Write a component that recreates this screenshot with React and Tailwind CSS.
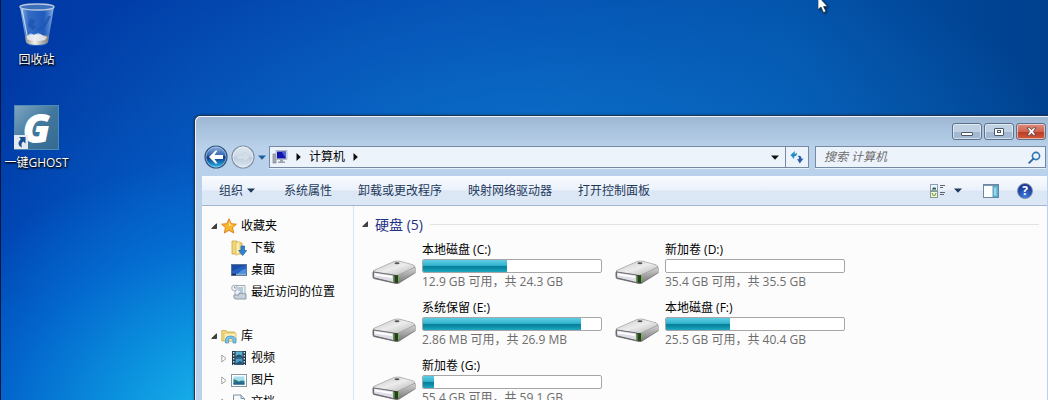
import { useState } from 'react';

const drives = [
  { name: '本地磁盘 (C:)', used: 47, info: '12.9 GB 可用，共 24.3 GB' },
  { name: '新加卷 (D:)', used: 0, info: '35.4 GB 可用，共 35.5 GB' },
  { name: '系统保留 (E:)', used: 89, info: '2.86 MB 可用，共 26.9 MB' },
  { name: '本地磁盘 (F:)', used: 36, info: '25.5 GB 可用，共 40.4 GB' },
  { name: '新加卷 (G:)', used: 6, info: '55.4 GB 可用，共 59.1 GB' },
];

function RecycleBinIcon() {
  return (
    <svg width="36" height="44" viewBox="0 0 36 44" aria-hidden="true">
      <defs>
        <linearGradient id="binGlass" x1="0" x2="1" y1="0" y2="0">
          <stop offset="0" stopColor="#b9d8f5" stopOpacity=".85" />
          <stop offset=".25" stopColor="#5f96dd" stopOpacity=".55" />
          <stop offset=".7" stopColor="#3f7bd0" stopOpacity=".5" />
          <stop offset="1" stopColor="#a8c8ee" stopOpacity=".85" />
        </linearGradient>
        <linearGradient id="binBase" x1="0" x2="1" y1="0" y2="0">
          <stop offset="0" stopColor="#8e8e8c" />
          <stop offset=".4" stopColor="#f2f0ea" />
          <stop offset="1" stopColor="#77797c" />
        </linearGradient>
      </defs>
      <path d="M1 4 L7 39 Q8 43 18 43 Q28 43 29 39 L35 4Z" fill="url(#binGlass)" />
      <path d="M6 33 Q17 30 30 33 L29 39 Q27 42 18 42 Q9 42 7 39Z" fill="url(#binBase)" />
      <path d="M8 34 Q11 28 15 32 Q20 28 24 33 L28 34 L26 37 Q18 39 10 37Z" fill="#e9eef5" opacity=".8" />
      <path d="M11 15 l5 2 -2 5 3 2 -3 3 -5 -4z" fill="#1c55b0" opacity=".8" />
      <path d="M32 13 Q29 22 22 27 L17 27 Q26 23 29 13Z" fill="#1c55b0" opacity=".75" />
      <ellipse cx="18" cy="4" rx="17" ry="3" fill="#3c6fbe" stroke="#b9c8dc" strokeWidth="1.4" />
      <path d="M3 6 L9 37" stroke="#e1effc" strokeWidth="1" opacity=".8" />
    </svg>
  );
}

function GhostIcon() {
  return (
    <span className="relative flex size-[45px] items-center justify-center border border-[#4f8ab4] bg-gradient-to-br from-[#7ea6c0] via-[#41789e] to-[#346a91]">
      <span className="font-['Open_Sans','Liberation_Sans',sans-serif] text-[40px] leading-10 font-extrabold text-white italic [text-shadow:none]">G</span>
      <svg className="absolute bottom-0 -left-px" width="14" height="14" viewBox="0 0 14 14" aria-hidden="true">
        <rect width="14" height="14" fill="#e4e9ee" />
        <path d="M5 2 L11.500 2 L11.500 8.500 L9.300 6.500 Q6.500 8 8 12.500 Q1.500 10 6.800 4Z" fill="#174f94" />
      </svg>
    </span>
  );
}

function BackIcon() {
  return (
    <svg width="24" height="24" viewBox="0 0 24 24" aria-hidden="true">
      <defs>
        <linearGradient id="backBlue" x1="0" x2="0" y1="0" y2="1">
          <stop offset="0" stopColor="#8fb3df" />
          <stop offset=".45" stopColor="#2f62ad" />
          <stop offset=".5" stopColor="#0b3380" />
          <stop offset="1" stopColor="#2bc0f0" />
        </linearGradient>
      </defs>
      <circle cx="12" cy="12" r="11" fill="url(#backBlue)" stroke="#33537e" strokeWidth="1.200" />
      <circle cx="12" cy="12" r="10" fill="none" stroke="#c5dcf4" strokeWidth=".8" opacity=".7" />
      <path d="M5 12 L11.500 5.500 H13.500 L10.500 10 H19 V14 H10.500 L13.500 18.500 H11.500Z" fill="#fff" />
    </svg>
  );
}

function ForwardIcon() {
  return (
    <svg width="24" height="24" viewBox="0 0 24 24" aria-hidden="true">
      <defs>
        <linearGradient id="fwdGrey" x1="0" x2="0" y1="0" y2="1">
          <stop offset="0" stopColor="#dde6f0" />
          <stop offset=".48" stopColor="#d0dbe7" />
          <stop offset=".52" stopColor="#bccbdb" />
          <stop offset="1" stopColor="#dfe9f3" />
        </linearGradient>
      </defs>
      <circle cx="12" cy="12" r="11" fill="url(#fwdGrey)" stroke="#8090a4" strokeWidth="1.200" />
      <circle cx="12" cy="12" r="10" fill="none" stroke="#f0f5fa" strokeWidth=".8" opacity=".8" />
      <path d="M19 12 L13 7 V10 H6 V14 H13 V17Z" fill="#d3dee9" stroke="#c3d0de" strokeWidth=".6" />
    </svg>
  );
}

function ComputerIcon() {
  return (
    <svg width="16" height="16" viewBox="0 0 16 16" aria-hidden="true">
      <rect x="1" y="5" width="3" height="9" fill="#a8adb5" stroke="#74797f" strokeWidth=".6" />
      <rect x="4" y="1.500" width="11" height="9" fill="#dfe4ea" stroke="#9aa2ac" strokeWidth=".6" />
      <rect x="5" y="2.500" width="9" height="7" fill="#1414a8" />
      <path d="M9.500 2.500 H14 V9.500 Z" fill="#4a63e0" />
      <path d="M8 10.500 h3 v2 h2 v1.500 h-7 v-1.500 h2z" fill="#9fa5ad" />
    </svg>
  );
}

function RefreshIcon() {
  return (
    <svg width="14" height="14" viewBox="0 0 14 14" fill="none" aria-hidden="true">
      <path d="M.5 5 L5 1 L4.600 3.800 Q6.500 4 7 2.500 Q7.300 6.500 4.300 6.300 L4 9Z" fill="#1e8fc4" />
      <path d="M13.500 8.500 L9.800 13.500 L7 9 L9 9.200 Q9.300 6.500 7.500 6 Q11.500 5 11.500 8.700Z" fill="#2b5fa8" />
    </svg>
  );
}

function SearchIcon() {
  return (
    <svg width="13" height="13" viewBox="0 0 13 13" fill="none" aria-hidden="true">
      <circle cx="8" cy="5" r="3.600" stroke="#3175b5" strokeWidth="1.600" fill="#e8f3fc" />
      <path d="M5.200 7.800 L1.200 11.800" stroke="#2b66a3" strokeWidth="1.900" strokeLinecap="round" />
    </svg>
  );
}

function ViewIcon() {
  return (
    <svg width="16" height="16" viewBox="0 0 16 16" aria-hidden="true">
      <rect x=".5" y="1.500" width="7" height="6" fill="#eef6fb" stroke="#8aa2ae" />
      <path d="M2 6 L4 4 L5 5 L6 4.500 V6.500 H2Z" fill="#22584f" />
      <rect x=".5" y="8.500" width="7" height="6" fill="#f3f6da" stroke="#8a9a86" />
      <path d="M2 10 L3.500 13 M6 10 L4.500 13" stroke="#5e8a3d" />
      <path d="M10 2.500 h5 M10 4.500 h3 M10 9.500 h5 M10 11.500 h4" stroke="#5b6470" />
    </svg>
  );
}

function PreviewIcon() {
  return (
    <svg width="16" height="14" viewBox="0 0 16 14" aria-hidden="true">
      <rect x=".5" y=".5" width="15" height="13" fill="#fdfefe" stroke="#6d87a3" />
      <path d="M1 1.500 H15" stroke="#8098b2" />
      <rect x="10" y="2" width="5" height="11" fill="#6fc2dd" stroke="#4b8eac" strokeWidth=".8" />
      <path d="M12 4 V11" stroke="#c8ecf6" />
    </svg>
  );
}

function StarIcon() {
  return (
    <svg width="16" height="16" viewBox="0 0 16 16" aria-hidden="true">
      <path d="M8 .8 L10.200 5.700 L15.400 6.200 L11.500 9.700 L12.700 15 L8 12.300 L3.300 15 L4.500 9.700 L.6 6.200 L5.800 5.700Z" fill="#fbb72c" stroke="#d9791a" strokeWidth=".9" />
      <path d="M8 3 L9.300 6.800 L12.500 7 L8 8Z" fill="#ffe9a3" />
    </svg>
  );
}

function DownloadIcon() {
  return (
    <svg width="16" height="16" viewBox="0 0 16 16" aria-hidden="true">
      <path d="M1 1 H6 L7 3 H11 V14 H1Z" fill="#f1d77a" stroke="#c9a63d" strokeWidth=".8" />
      <path d="M5 3 L9 1.500 V13 L5 15.500Z" fill="#fbeeb0" stroke="#d0b355" strokeWidth=".6" />
      <path d="M10 6 H13.500 V10.500 H15.700 L11.700 15.500 L7.700 10.500 H10Z" fill="#2b83d2" stroke="#1a5fa6" strokeWidth=".7" />
    </svg>
  );
}

function DesktopIcon() {
  return (
    <svg width="16" height="16" viewBox="0 0 16 16" aria-hidden="true">
      <rect x=".5" y="2.500" width="15" height="11" fill="#2762c0" stroke="#5a7295" />
      <path d="M1 3 H15 L1 9Z" fill="#1b4ca6" />
      <path d="M6 13 Q10 7 15 7 V13Z" fill="#4c93de" />
      <path d="M1 12.500 H5" stroke="#1b2c4c" strokeWidth="1.400" />
      <path d="M5 12.500 H15" stroke="#8fb0d2" strokeWidth="1.400" />
    </svg>
  );
}

function RecentIcon() {
  return (
    <svg width="16" height="16" viewBox="0 0 16 16" aria-hidden="true">
      <path d="M4 1.500 H14 V12 H4Z" fill="#edf2f6" stroke="#8d9aa8" strokeWidth=".8" />
      <circle cx="3.500" cy="4" r="2.800" fill="#f4f6f8" stroke="#8d9aa8" strokeWidth=".8" />
      <path d="M3.500 2.500 V4 H5" stroke="#68788a" fill="none" strokeWidth=".8" />
      <path d="M7 4 h5 M7 6 h5 M9 8 h3" stroke="#7fa3bf" />
      <path d="M3 11 H8 V9 L15 10 V15 H4 Q2 14 3 11Z" fill="#c5d2dc" stroke="#7d8b98" strokeWidth=".8" />
    </svg>
  );
}

function LibraryIcon() {
  return (
    <svg width="16" height="16" viewBox="0 0 16 16" aria-hidden="true">
      <path d="M.8 2.500 H5 L6 4 H13.500 V13 H.8Z" fill="#f4dc84" stroke="#c8a742" strokeWidth=".8" />
      <path d="M3 5 H15 V13 H3Z" fill="#fbeeb2" stroke="#d3b553" strokeWidth=".7" />
      <path d="M4.500 15 V11 Q5 8 9.500 8 Q14 8 15 11 V15 H12 V12 Q11.500 10.500 9.500 10.500 Q8 10.500 7.500 12 V15Z" fill="#7cc3ea" stroke="#3f8fc2" strokeWidth=".7" />
    </svg>
  );
}

function VideoIcon() {
  return (
    <svg width="16" height="16" viewBox="0 0 16 16" aria-hidden="true">
      <rect x="1" y="1" width="14" height="14" fill="#26384a" />
      <rect x="4.500" y="1.500" width="7" height="6" fill="#59b0cf" />
      <rect x="4.500" y="8.500" width="7" height="6" fill="#4a9fcb" />
      <path d="M4.500 6 L8 4.500 L11.500 6 V7.500 H4.500Z M4.500 13.500 L9 11 L11.500 12.500 V14.500 H4.500Z" fill="#24536f" />
      <path d="M2.700 2 V15 M13.300 2 V15" stroke="#dfe8ee" strokeWidth="1.300" strokeDasharray="1.500 1.500" />
    </svg>
  );
}

function PictureIcon() {
  return (
    <svg width="16" height="16" viewBox="0 0 16 16" aria-hidden="true">
      <rect x=".5" y="2.500" width="15" height="12" fill="#fff" stroke="#8b979f" />
      <rect x="2.500" y="4.500" width="11" height="8" fill="#a5dcee" />
      <path d="M2.500 7 Q6 8 8 9.500 Q11 8 13.500 9 V12.500 H2.500Z" fill="#25807f" />
      <path d="M2.500 11 Q8 9.500 13.500 11.500 V12.500 H2.500Z" fill="#2c5f96" />
    </svg>
  );
}

function DocumentIcon() {
  return (
    <svg width="16" height="16" viewBox="0 0 16 16" aria-hidden="true">
      <path d="M2.500 1 H10 L13.500 4.500 V15 H2.500Z" fill="#f6fafc" stroke="#7f93a3" />
      <path d="M10 1 V4.500 H13.500" fill="#d3e2ec" stroke="#7f93a3" />
      <path d="M5 6.500 h6 M5 8.500 h6 M5 10.500 h6" stroke="#77a9c8" />
    </svg>
  );
}

function DriveIcon() {
  return (
    <svg className="shrink-0" width="44" height="26" viewBox="0 0 44 26" aria-hidden="true">
      <defs>
        <linearGradient id="driveTop" x1="0" x2="1" y1="0" y2="1">
          <stop offset="0" stopColor="#c4c4c4" />
          <stop offset=".5" stopColor="#ececec" />
          <stop offset="1" stopColor="#b4b4b4" />
        </linearGradient>
        <linearGradient id="driveSide" x1="0" x2="0" y1="0" y2="1">
          <stop offset="0" stopColor="#d2d2d2" />
          <stop offset="1" stopColor="#7a7a7a" />
        </linearGradient>
      </defs>
      <path d="M1.500 10.500 L22 1.500 Q25 .5 28 1.200 L41 4.800 Q43.500 6 43.500 8 V13 L27 23.500 Q25 24.500 22 23.500 L2 19 Q.5 18.500 .5 16.500 V12.500Z" fill="#777" />
      <path d="M1.500 10.500 L22 1.500 Q25 .5 28 1.200 L41 4.800 Q43.500 6.500 42 7.500 L26 15 Q24.500 15.500 22 15 L2 12Z" fill="url(#driveTop)" stroke="#a6a6a6" strokeWidth=".6" />
      <path d="M26 15 L43 7.500 V12.500 L27 22.500Z" fill="url(#driveSide)" />
      <path d="M1.500 12 L21.500 15 V22.500 L2.500 18 Q1.500 17.500 1.500 16Z" fill="#dedee8" stroke="#626266" strokeWidth=".9" />
      <path d="M3 13.500 L20 16 V18 L3 15.500Z" fill="#fff" />
      <path d="M22 15 L26 15.200 V23 L22 22.500Z" fill="#24401f" />
      <path d="M22 16 V22 M26.500 15.500 V21.500" stroke="#76b24c" />
      <ellipse cx="25" cy="3.200" rx="2.500" ry="1" fill="#555" />
    </svg>
  );
}

function DownArrow({ className }) {
  return (
    <svg className={className} width="8" height="5" viewBox="0 0 8 5" aria-hidden="true">
      <path d="M0 .5 H8 L4 4.800Z" fill="currentColor" />
    </svg>
  );
}

function RightArrow() {
  return (
    <svg width="5" height="8" viewBox="0 0 5 8" aria-hidden="true">
      <path d="M.5 0 L4.800 4 L.5 8Z" fill="#0b0b0b" />
    </svg>
  );
}

function OpenTriangle() {
  return (
    <svg width="6" height="6" viewBox="0 0 7 7" aria-hidden="true">
      <path d="M6.500 .8 V6.500 H.8Z" fill="#404040" stroke="#111" strokeWidth=".8" />
    </svg>
  );
}

function ClosedTriangle() {
  return (
    <svg width="6" height="9" viewBox="0 0 6 9" aria-hidden="true">
      <path d="M.8 1 L5 4.500 L.8 8Z" fill="#fff" stroke="#a2a2a2" />
    </svg>
  );
}

const favorites = [
  { name: '下载', icon: <DownloadIcon /> },
  { name: '桌面', icon: <DesktopIcon /> },
  { name: '最近访问的位置', icon: <RecentIcon /> },
];

const libraries = [
  { name: '视频', icon: <VideoIcon />, expandable: true },
  { name: '图片', icon: <PictureIcon />, expandable: true },
  { name: '文档', icon: <DocumentIcon />, expandable: true },
];

function TreeSection({ title, icon, items }) {
  const [open, setOpen] = useState(true);

  return (
    <section className="mb-[22px]">
      <button onClick={() => setOpen(!open)} aria-expanded={open} className="flex h-[22px] items-center gap-1 whitespace-nowrap">
        <span className="flex w-[6px] justify-center">{open ? <OpenTriangle /> : <ClosedTriangle />}</span>
        {icon}
        <span>{title}</span>
      </button>
      {open && (
        <ul>
          {items.map((item) => (
            <li key={item.name}>
              <button className="flex h-[22px] items-center gap-1 pl-[10px] whitespace-nowrap">
                <span className="w-[6px]">{item.expandable && <ClosedTriangle />}</span>
                {item.icon}
                <span>{item.name}</span>
              </button>
            </li>
          ))}
        </ul>
      )}
    </section>
  );
}

function DriveTile({ drive }) {
  return (
    <li className="flex h-[58px] gap-[6px]">
      <div className="pt-[19px]">
        <DriveIcon />
      </div>
      <div className="w-[180px]">
        <p className="h-[18px] leading-[18px] whitespace-nowrap text-black">{drive.name}</p>
        <div className="h-[14px] overflow-hidden rounded-[2px] border border-[#a6a6a6] bg-white">
          <div
            className="h-full bg-[linear-gradient(180deg,#5fcbe2_0%,#33b5d0_45%,#0a7f9a_52%,#0a8ba5_70%,#20a9c2_100%)]"
            style={{ width: `${drive.used}%` }}
          />
        </div>
        <p className="h-[18px] leading-[18px] whitespace-nowrap text-[#6d6d6d]">{drive.info}</p>
      </div>
    </li>
  );
}

function DesktopShortcut({ icon, label }) {
  return (
    <button className="flex w-[71px] flex-col items-center gap-[5px] leading-4 whitespace-nowrap text-white [text-shadow:1px_1px_2px_#000,0_1px_2px_#000]">
      {icon}
      {label}
    </button>
  );
}

function ExplorerWindow() {
  const [keyword, setKeyword] = useState('');
  const captionButton =
    'flex h-[17px] w-[30px] items-center justify-center rounded-[3px] border border-[#5b7190] shadow-[inset_0_0_0_1px_rgba(255,255,255,0.55)]';

  return (
    <main className="mt-[115px] flex min-w-0 flex-1 flex-col rounded-tl-[6px] border-t border-l border-[#1f3550] bg-[linear-gradient(180deg,#9db7d3_0px,#b9d1ea_32px,#b9d1ea_100%)] pr-px pl-[7px] shadow-[inset_1px_1px_0_#eaf4ff,0_0_3px_rgba(0,0,0,0.4)]">
      <header className="flex h-[30px] shrink-0 items-start justify-end gap-[2px] pt-[7px] pr-px">
        <button aria-label="最小化" className={`${captionButton} bg-[linear-gradient(180deg,#c0d1e4_50%,#a3b9d1_50%)]`}>
          <span className="mt-1 h-1 w-3 rounded-[1px] border border-[#4a5769] bg-white" />
        </button>
        <button aria-label="最大化" className={`${captionButton} bg-[linear-gradient(180deg,#c0d1e4_50%,#a3b9d1_50%)]`}>
          <span className="flex h-2 w-[10px] items-center justify-center rounded-[1px] border border-[#4a5769] bg-white">
            <span className="h-[3px] w-1 border border-[#4a5769]" />
          </span>
        </button>
        <button aria-label="关闭" className={`${captionButton} bg-[linear-gradient(180deg,#dd8d7d_0%,#cf6550_50%,#b93a24_50%,#cf5a3c_100%)]`}>
          <svg width="11" height="9" viewBox="0 0 11 9" aria-hidden="true">
            <path d="M1 .8 H4 L5.500 2.700 L7 .8 H10 L7.300 4.500 L10 8.200 H7 L5.500 6.300 L4 8.200 H1 L3.700 4.500Z" fill="#fff" stroke="#5b3a41" strokeWidth=".8" />
          </svg>
        </button>
      </header>

      <div className="flex h-[30px] shrink-0 items-start pr-px">
        <nav className="flex h-[22px] items-center pl-[2px]">
          <button aria-label="后退"><BackIcon /></button>
          <button aria-label="前进" className="ml-[3px]"><ForwardIcon /></button>
          <button aria-label="最近的页面" className="mx-[3px]"><DownArrow className="text-[#1d5e9e]" /></button>
        </nav>
        <div className="flex h-[22px] min-w-0 flex-1 items-center border border-[#7589a3] bg-[#edf3fb] shadow-[0_1px_0_#e6f0fa]">
          <div className="flex flex-1 items-center gap-2 pl-[2px]">
            <ComputerIcon />
            <RightArrow />
            <span className="text-black">计算机</span>
            <RightArrow />
          </div>
          <button aria-label="以前的位置" className="px-[6px]"><DownArrow className="text-[#111]" /></button>
          <button aria-label="刷新" className="flex h-full w-[23px] items-center justify-center border-l border-[#7589a3]"><RefreshIcon /></button>
        </div>
        <label className="ml-[6px] flex h-[22px] w-[231px] items-center border border-[#7589a3] bg-[#edf3fb] pr-1 pl-2 shadow-[0_1px_0_#e6f0fa]">
          <input
            type="text"
            aria-label="搜索 计算机"
            placeholder="搜索 计算机"
            value={keyword}
            onChange={(e) => setKeyword(e.target.value)}
            className="min-w-0 flex-1 bg-transparent italic outline-none placeholder:text-[#6d6d6d]"
          />
          <SearchIcon />
        </label>
      </div>

      <div className="flex h-[30px] shrink-0 items-center gap-[26px] border-b border-[#a3b6cd] bg-[linear-gradient(180deg,#fafcfe_0%,#eaf1fa_48%,#dce7f5_52%,#dde8f6_100%)] pr-[14px] pl-[17px] whitespace-nowrap text-[#1e395b]">
        <button className="flex w-[39px] items-center gap-1">组织<DownArrow className="shrink-0" /></button>
        <button>系统属性</button>
        <button>卸载或更改程序</button>
        <button>映射网络驱动器</button>
        <button>打开控制面板</button>
        <div className="ml-auto flex items-center">
          <button aria-label="更改您的视图" className="flex items-center gap-2"><ViewIcon /><DownArrow /></button>
          <button aria-label="显示预览窗格" className="ml-[21px]"><PreviewIcon /></button>
          <button aria-label="获取帮助" className="ml-[18px] flex size-4 items-center justify-center rounded-full border border-[#7d8ba6] bg-[radial-gradient(circle_at_50%_90%,#3f7fe0,#1b3a98_70%)] text-[12px] leading-3 font-bold text-white">?</button>
        </div>
      </div>

      <div className="flex min-h-0 flex-1 bg-[#fcfcfc]">
        <aside className="w-[152px] shrink-0 overflow-hidden border-r border-[#d6e5f5] pt-[9px] pl-[9px] text-black">
          <TreeSection title="收藏夹" icon={<StarIcon />} items={favorites} />
          <TreeSection title="库" icon={<LibraryIcon />} items={libraries} />
        </aside>
        <section className="min-w-0 flex-1 overflow-hidden pt-[7px] pl-2">
          <h2 className="flex h-[22px] items-center gap-[7px] pr-2 text-[14px] whitespace-nowrap text-[#1e3287]">
            <OpenTriangle />
            硬盘 (5)
            <span className="h-px flex-1 bg-[#e2e2e2]" />
          </h2>
          <ul className="mt-[6px] grid grid-cols-[repeat(auto-fill,243px)] pl-[10px]">
            {drives.map((drive) => (
              <DriveTile key={drive.name} drive={drive} />
            ))}
          </ul>
        </section>
      </div>
    </main>
  );
}

function App() {
  return (
    <div className="relative flex h-screen overflow-hidden border-l border-[#06183a] bg-[radial-gradient(ellipse_440px_350px_at_24%_108%,#22c6f2_0%,rgba(12,155,228,0.9)_32%,rgba(4,118,218,0.75)_56%,rgba(0,90,205,0.3)_80%,rgba(0,80,200,0)_100%),radial-gradient(ellipse_560px_260px_at_50%_45%,#0c74cc_0%,rgba(8,96,190,0)_100%),linear-gradient(90deg,#0039a6_0%,#0347ae_45%,#024fa6_75%,#00408e_100%)] font-['Open_Sans','Noto_Sans_CJK_SC',sans-serif] text-[12px]">
      <div className="flex w-[193px] shrink-0 flex-col gap-[37px] pt-[3px]">
        <DesktopShortcut icon={<RecycleBinIcon />} label="回收站" />
        <DesktopShortcut icon={<GhostIcon />} label="一键GHOST" />
      </div>
      <ExplorerWindow />
      <svg className="pointer-events-none absolute top-0 left-[78%] drop-shadow-[1px_1px_1px_rgba(0,0,0,0.6)]" width="12" height="14" viewBox="0 0 12 14" aria-hidden="true">
        <path d="M0 -4 V9.500 L3 7 L5.500 12.500 L8 11.500 L5.500 6.500 H9.500Z" fill="#fff" stroke="#123" strokeWidth=".6" />
      </svg>
    </div>
  );
}

export default App;
